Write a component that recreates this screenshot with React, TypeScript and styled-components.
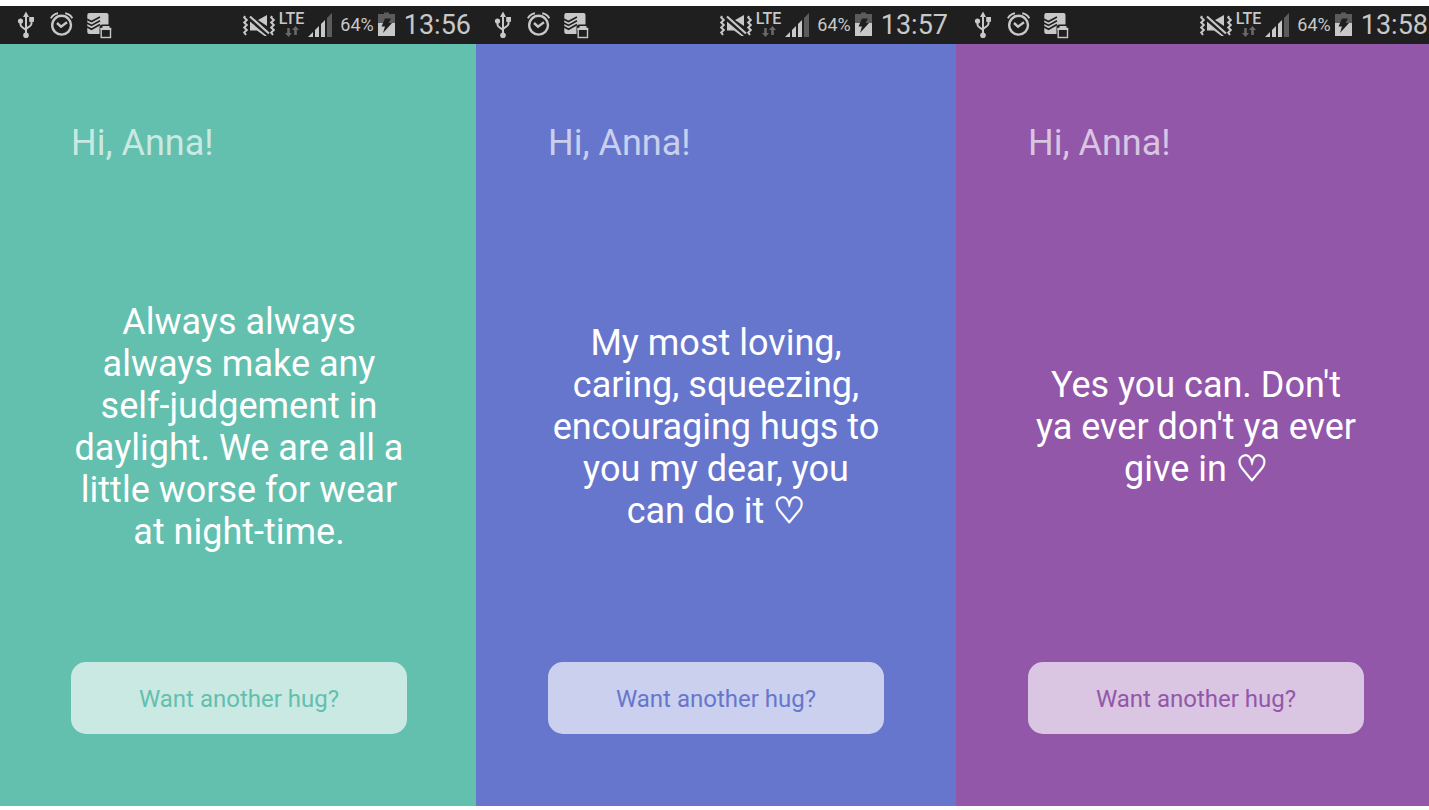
import React from "react";
import styled, { createGlobalStyle } from "styled-components";

const GlobalStyle = createGlobalStyle`
  *, *::before, *::after { box-sizing: border-box; }
  body {
    margin: 0;
    background: #ffffff;
    font-family: Roboto, "Liberation Sans", sans-serif;
  }
`;

const Gallery = styled.main`
  display: grid;
  grid-template-columns: 476fr 480fr 473fr;
  min-height: 100vh;
  padding: 6px 0 4px;
`;

const Screen = styled.section<{ $color: string }>`
  display: flex;
  flex-direction: column;
  min-width: 0;
  overflow: hidden;
  background: ${(p) => p.$color};
`;

const StatusBar = styled.header<{ $start: number; $end: number }>`
  display: flex;
  align-items: center;
  justify-content: space-between;
  height: 38px;
  padding: 0 ${(p) => p.$end}px 0 ${(p) => p.$start}px;
  background: #1f1f1f;
  color: #c8c8c8;
`;

const Notifications = styled.div`
  display: flex;
  align-items: center;
  gap: 14px;
`;

const Indicators = styled.div`
  display: flex;
  align-items: center;
  gap: 4px;
`;

const Icon = styled.svg`
  display: block;
  flex: none;
`;

const Network = styled.div`
  display: flex;
  flex-direction: column;
  align-items: center;
  font-size: 16px;
  font-weight: 500;
  line-height: 13px;
`;

const BatteryLevel = styled.span`
  padding-left: 4px;
  font-size: 18px;
  line-height: 24px;
`;

const Clock = styled.time`
  padding-left: 4px;
  font-size: 27px;
  line-height: 38px;
`;

const Content = styled.div<{ $start: number; $end: number }>`
  display: flex;
  flex: 1;
  flex-direction: column;
  padding: 78px ${(p) => p.$end}px 72px ${(p) => p.$start}px;
`;

const Greeting = styled.h1`
  margin: 0 0 28px;
  color: rgba(255, 255, 255, 0.66);
  font-size: 36px;
  font-weight: 400;
  line-height: 42px;
`;

const Message = styled.p`
  display: flex;
  flex: 1;
  flex-direction: column;
  justify-content: center;
  margin: 0;
  color: #ffffff;
  font-size: 36px;
  line-height: 42px;
  text-align: center;
  white-space: nowrap;
`;

const Line = styled.span`
  display: block;
`;

const Heart = styled.span`
  font-family: "DejaVu Sans", sans-serif;
  line-height: 1;
  -webkit-text-stroke: 1px currentColor;
`;

const HugButton = styled.button<{ $color: string }>`
  width: 100%;
  height: 72px;
  padding: 2px 0 0;
  border: 0;
  border-radius: 15px;
  background: rgba(255, 255, 255, 0.66);
  color: ${(p) => p.$color};
  font-family: inherit;
  font-size: 24px;
  line-height: 28px;
  cursor: pointer;
`;

const LIGHT = "#c8c8c8";
const DIM = "#5c5c5c";
const DARK = "#1f1f1f";

const UsbIcon = () => (
  <Icon width="18" height="28" viewBox="0 0 18 28" fill="none" stroke={LIGHT} strokeWidth="2">
    <path d="M9 5V24M3.5 10V13.5Q3.5 15 5 16L9 19M14.5 9V12.5Q14.5 14 13 15L9 18" />
    <path d="M9 0.500L12 6H6Z" fill={LIGHT} stroke="none" />
    <circle cx="3.5" cy="10" r="2.6" fill={LIGHT} stroke="none" />
    <path d="M12.2 6H17V10.8H12.2Z" fill={LIGHT} stroke="none" />
    <circle cx="9" cy="24.3" r="2.8" fill={LIGHT} stroke="none" />
  </Icon>
);

const AlarmIcon = () => (
  <Icon width="24" height="28" viewBox="0 0 24 28" fill="none" stroke={LIGHT}>
    <circle cx="12.600" cy="14.200" r="9.400" strokeWidth="2.400" />
    <path d="M1.900 7.400Q4 3.200 9 2.300M23.300 7.400Q21.200 3.200 16.200 2.300" strokeWidth="2" />
    <path d="M8 12L12 15.600L18 11.200" strokeWidth="2.400" />
  </Icon>
);

const TasksIcon = () => (
  <Icon width="26" height="28" viewBox="0 0 26 28" fill="none">
    <rect x="0.300" y="2" width="21.200" height="21" rx="2" fill={LIGHT} />
    <g stroke={DARK} strokeWidth="1.700">
      <path d="M0 8.200L4.500 10.600L13 6" />
      <path d="M0 12L4.500 14.400L13 9.800" />
      <path d="M0 15.800L4.500 18.200L13 13.600" />
    </g>
    <path d="M12.500 28V16.500Q12.500 13.500 15.500 13.500H26V28Z" fill={DARK} />
    <rect x="14.200" y="17.500" width="9.300" height="9" stroke={LIGHT} strokeWidth="1.400" />
    <path d="M13.500 17H24.200V19H13.500ZM15.500 17V15H22.500V17Z" fill={LIGHT} />
  </Icon>
);

const MuteIcon = () => (
  <Icon width="32" height="26" viewBox="0 0 32 26" fill="none" stroke={LIGHT}>
    <path
      d="M2 4L1.200 5.500L3.800 8L1.200 10.500L3.800 13L1.200 15.500L3.800 18L1.200 20.500L3 23"
      strokeWidth="2"
    />
    <path
      d="M29 4L28.200 5.500L30.800 8L28.200 10.500L30.800 13L28.200 15.500L30.800 18L28.200 20.500L30 23"
      strokeWidth="2"
    />
    <path d="M15 8L24 3V14Z" fill={LIGHT} stroke="none" />
    <path d="M7 9.500L24 24H21.500L14 18.500H7Z" fill={LIGHT} stroke="none" />
    <path d="M7 4.500L26 21.500" strokeWidth="2.200" />
  </Icon>
);

const DataArrows = () => (
  <Icon width="16" height="13" viewBox="0 0 16 13" fill="#686868">
    <path d="M3.200 3H5.800V8H8L4.500 12L1 8H3.200Z" />
    <path d="M10.200 10H12.800V5H15L11.500 1L8 5H10.200Z" />
  </Icon>
);

const SignalIcon = () => (
  <Icon width="24" height="26" viewBox="0 0 24 26" fill={LIGHT}>
    <path d="M0 25L5 20V25Z" />
    <path d="M7 18L11 14V25H7Z" />
    <path d="M13 12L17 8V25H13Z" />
    <path d="M19 6L24 1V25H19Z" fill={DIM} />
  </Icon>
);

const BatteryIcon = () => (
  <Icon width="18" height="26" viewBox="0 0 18 26">
    <path d="M0 2H6V0.500H11V2H17V12H0Z" fill={DIM} />
    <path d="M0 11H17V24H0Z" fill={LIGHT} />
    <path d="M7 6.500H13L10.500 11H14L5 21L7 14.500H3.500Z" fill={DARK} />
  </Icon>
);

interface Hug {
  time: string;
  color: string;
  lines: string[];
  barInset: [number, number];
  inset: [number, number];
}

const hugs: Hug[] = [
  {
    time: "13:56",
    color: "#63bfae",
    lines: [
      "Always always",
      "always make any",
      "self-judgement in",
      "daylight. We are all a",
      "little worse for wear",
      "at night-time.",
    ],
    barInset: [17, 5],
    inset: [71, 69],
  },
  {
    time: "13:57",
    color: "#6776cd",
    lines: [
      "My most loving,",
      "caring, squeezing,",
      "encouraging hugs to",
      "you my dear, you",
      "can do it ♡",
    ],
    barInset: [18, 8],
    inset: [72, 72],
  },
  {
    time: "13:58",
    color: "#9257a9",
    lines: ["Yes you can. Don't", "ya ever don't ya ever", "give in ♡"],
    barInset: [18, 1],
    inset: [72, 65],
  },
];

const MessageLine = ({ text }: { text: string }) => {
  const [words, rest] = text.split("♡");
  return (
    <Line>
      {words}
      {rest === undefined ? " " : <Heart>♡</Heart>}
    </Line>
  );
};

const HugScreen = ({ time, color, lines, barInset, inset }: Hug) => (
  <Screen $color={color}>
    <StatusBar $start={barInset[0]} $end={barInset[1]}>
      <Notifications>
        <UsbIcon />
        <AlarmIcon />
        <TasksIcon />
      </Notifications>
      <Indicators>
        <MuteIcon />
        <Network>
          LTE
          <DataArrows />
        </Network>
        <SignalIcon />
        <BatteryLevel>64%</BatteryLevel>
        <BatteryIcon />
        <Clock>{time}</Clock>
      </Indicators>
    </StatusBar>
    <Content $start={inset[0]} $end={inset[1]}>
      <Greeting>Hi, Anna!</Greeting>
      <Message>
        {lines.map((line) => (
          <MessageLine key={line} text={line} />
        ))}
      </Message>
      <HugButton type="button" $color={color}>
        Want another hug?
      </HugButton>
    </Content>
  </Screen>
);

export default function App() {
  return (
    <>
      <GlobalStyle />
      <Gallery>
        {hugs.map((hug) => (
          <HugScreen key={hug.time} {...hug} />
        ))}
      </Gallery>
    </>
  );
}
